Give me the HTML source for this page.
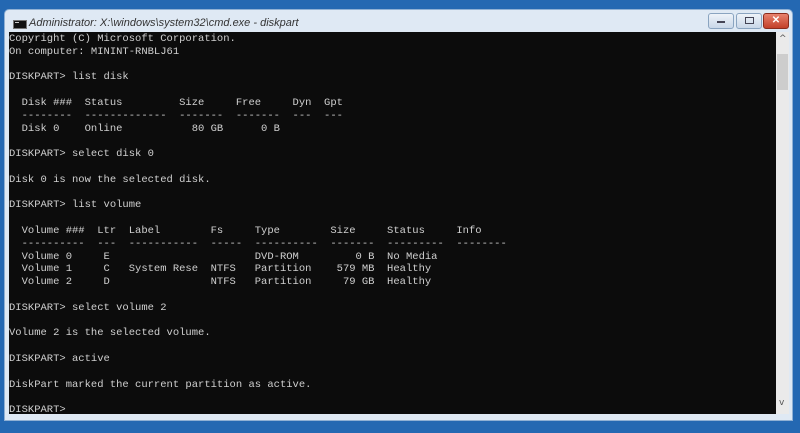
<!DOCTYPE html>
<html><head><meta charset="utf-8"><style>
html,body{margin:0;padding:0;width:800px;height:433px;overflow:hidden;background:#2468b2;}
.win{position:absolute;left:4px;top:9px;width:787px;height:410px;background:#dfe9f4;border:1px solid #8fb0d4;border-radius:5px 5px 0 0;}
.title{position:absolute;left:24px;top:4px;font:italic 11px "Liberation Sans",sans-serif;color:#333;}
.icon{position:absolute;left:8px;top:10px;width:12px;height:7px;background:#111;border:1px solid #777;}
.icon:after{content:"";position:absolute;left:1px;top:1px;width:4px;height:2px;border-top:1px solid #ccc;}
.con{position:absolute;left:9px;top:32px;width:767px;height:382px;background:#0c0c0c;}
pre{margin:0;position:absolute;left:0;top:1px;font-family:"Liberation Mono",monospace;font-size:10.5px;line-height:12.8px;color:#d0d0d0;}
.sb{position:absolute;left:776px;top:32px;width:13px;height:382px;background:#eaeaea;}
.thumb{position:absolute;left:1px;top:22px;width:11px;height:36px;background:#cdcdcd;}
.btn{position:absolute;top:13px;height:14px;border:1px solid #8aa4c0;border-radius:3px;background:linear-gradient(#eef3f9,#c9d7e8);}
.close{background:linear-gradient(#e8826e,#c2402a);border-color:#8a2c1e;}
</style></head><body>
<div class="win">
<div class="icon"></div>
<div class="title" style="left:24px;top:7px">Administrator: X:\windows\system32\cmd.exe - diskpart</div>
</div>
<div class="btn" style="left:708px;width:24px"><div style="position:absolute;left:8px;top:7px;width:8px;height:2px;background:#445"></div></div>
<div class="btn" style="left:736px;width:24px"><div style="position:absolute;left:8px;top:3px;width:7px;height:5px;border:1px solid #445"></div></div>
<div class="btn close" style="left:763px;width:24px;color:#fff;font:bold 10px 'Liberation Sans',sans-serif;text-align:center;line-height:14px">✕</div>
<div class="con"><pre>Copyright (C) Microsoft Corporation.
On computer: MININT-RNBLJ61

DISKPART&gt; list disk

  Disk ###  Status         Size     Free     Dyn  Gpt
  --------  -------------  -------  -------  ---  ---
  Disk 0    Online           80 GB      0 B

DISKPART&gt; select disk 0

Disk 0 is now the selected disk.

DISKPART&gt; list volume

  Volume ###  Ltr  Label        Fs     Type        Size     Status     Info
  ----------  ---  -----------  -----  ----------  -------  ---------  --------
  Volume 0     E                       DVD-ROM         0 B  No Media
  Volume 1     C   System Rese  NTFS   Partition    579 MB  Healthy
  Volume 2     D                NTFS   Partition     79 GB  Healthy

DISKPART&gt; select volume 2

Volume 2 is the selected volume.

DISKPART&gt; active

DiskPart marked the current partition as active.

DISKPART&gt;</pre></div>
<div class="sb"><div class="thumb"></div>
<div style="position:absolute;left:3px;top:2px;font:9px 'DejaVu Sans',sans-serif;color:#555">^</div>
<div style="position:absolute;left:3px;top:366px;font:9px 'DejaVu Sans',sans-serif;color:#555">v</div></div>
</body></html>
